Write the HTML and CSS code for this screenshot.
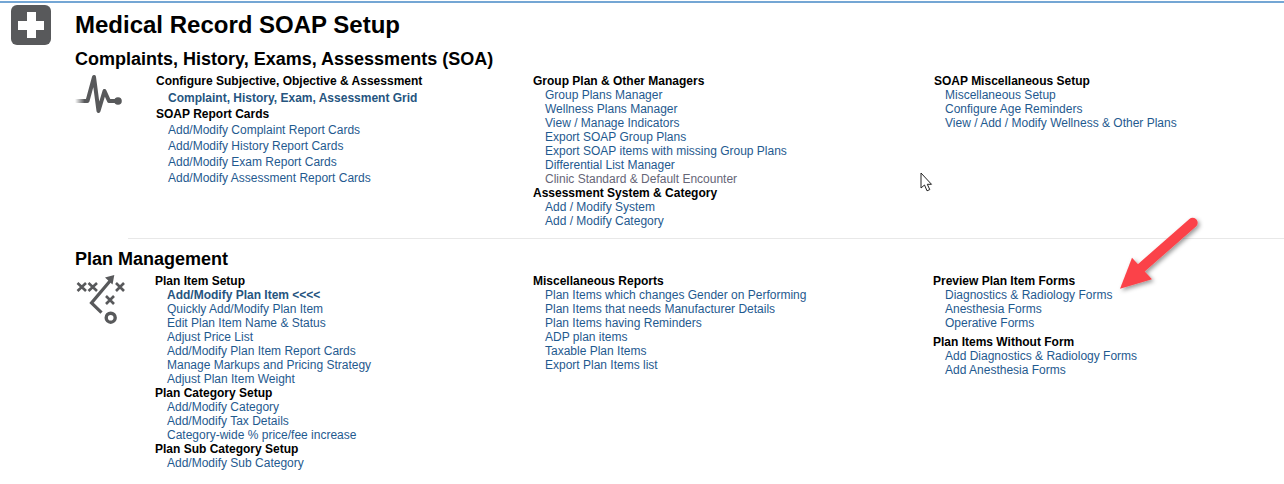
FILE: index.html
```html
<!DOCTYPE html>
<html lang="en">
<head>
    <meta charset="UTF-8">
    <title>Medical Record SOAP Setup</title>
    <link rel="stylesheet" href="styles.css">
</head>
<body>
    <div class="page">
        <div class="side">
            <div class="plusBox">
                <svg width="40" height="40" viewBox="0 0 40 40"><rect width="40" height="40" rx="6" fill="#58595b"/><path d="M16 7h9v9h8v9h-8v8h-9v-8H7v-9h9z" fill="#fff"/></svg>
            </div>
        </div>
        <div class="content">
            <h1>Medical Record SOAP Setup</h1>

            <div class="section first">
                <h2>Complaints, History, Exams, Assessments (SOA)</h2>
                <div class="row">
                    <div class="icon">
                        <svg width="50" height="42" viewBox="0 0 50 42"><defs><linearGradient id="fade"><stop offset="0" stop-color="#58595b" stop-opacity="0"/><stop offset="0.8" stop-color="#58595b"/></linearGradient></defs><rect x="0" y="25" width="12" height="4" fill="url(#fade)"/><path d="M11 27h1.500L19 3l4.500 34 6-20 4.500 10h9" stroke="#58595b" stroke-width="4" stroke-linejoin="round" fill="none"/><circle cx="43" cy="27" r="3.800" fill="#58595b"/></svg>
                    </div>
                    <div class="col colA">
                        <h3 class="gapBelow">Configure Subjective, Objective &amp; Assessment</h3>
                        <ul class="tall">
                            <li><a class="strong">Complaint, History, Exam, Assessment Grid</a></li>
                        </ul>
                        <h3 class="tallHead">SOAP Report Cards</h3>
                        <ul class="tall">
                            <li><a>Add/Modify Complaint Report Cards</a></li>
                            <li><a>Add/Modify History Report Cards</a></li>
                            <li><a>Add/Modify Exam Report Cards</a></li>
                            <li><a>Add/Modify Assessment Report Cards</a></li>
                        </ul>
                    </div>
                    <div class="col colB">
                        <h3>Group Plan &amp; Other Managers</h3>
                        <ul>
                            <li><a>Group Plans Manager</a></li>
                            <li><a>Wellness Plans Manager</a></li>
                            <li><a>View / Manage Indicators</a></li>
                            <li><a>Export SOAP Group Plans</a></li>
                            <li><a>Export SOAP items with missing Group Plans</a></li>
                            <li><a>Differential List Manager</a></li>
                            <li><a class="muted">Clinic Standard &amp; Default Encounter</a></li>
                        </ul>
                        <h3>Assessment System &amp; Category</h3>
                        <ul>
                            <li><a>Add / Modify System</a></li>
                            <li><a>Add / Modify Category</a></li>
                        </ul>
                    </div>
                    <div class="col colC">
                        <h3>SOAP Miscellaneous Setup</h3>
                        <ul>
                            <li><a>Miscellaneous Setup</a></li>
                            <li><a>Configure Age Reminders</a></li>
                            <li><a>View / Add / Modify Wellness &amp; Other Plans</a></li>
                        </ul>
                    </div>
                </div>
            </div>

            <div class="section second">
                <h2>Plan Management</h2>
                <div class="row">
                    <div class="icon">
                        <svg width="50" height="50" viewBox="0 0 50 50" fill="none" stroke="#58595b" stroke-width="2.600"><path d="M2.500 9l8.500 8M11 9l-8.500 8M13.500 9l8.500 8M22 9l-8.500 8M41 9l8 8M49 9l-8 8M31 22l8 8M39 22l-8 8"/><path d="M35 7L16.500 29l10 9.700" stroke-width="3.200"/><path d="M39.300 1L30 3.500l7.500 7z" fill="#58595b" stroke="none"/><circle cx="35.700" cy="43.700" r="4.500" stroke-width="3.400"/></svg>
                    </div>
                    <div class="col colA">
                        <h3>Plan Item Setup</h3>
                        <ul>
                            <li><a class="strong">Add/Modify Plan Item &lt;&lt;&lt;&lt;</a></li>
                            <li><a>Quickly Add/Modify Plan Item</a></li>
                            <li><a>Edit Plan Item Name &amp; Status</a></li>
                            <li><a>Adjust Price List</a></li>
                            <li><a>Add/Modify Plan Item Report Cards</a></li>
                            <li><a>Manage Markups and Pricing Strategy</a></li>
                            <li><a>Adjust Plan Item Weight</a></li>
                        </ul>
                        <h3>Plan Category Setup</h3>
                        <ul>
                            <li><a>Add/Modify Category</a></li>
                            <li><a>Add/Modify Tax Details</a></li>
                            <li><a>Category-wide % price/fee increase</a></li>
                        </ul>
                        <h3>Plan Sub Category Setup</h3>
                        <ul>
                            <li><a>Add/Modify Sub Category</a></li>
                        </ul>
                    </div>
                    <div class="col colB">
                        <h3>Miscellaneous Reports</h3>
                        <ul>
                            <li><a>Plan Items which changes Gender on Performing</a></li>
                            <li><a>Plan Items that needs Manufacturer Details</a></li>
                            <li><a>Plan Items having Reminders</a></li>
                            <li><a>ADP plan items</a></li>
                            <li><a>Taxable Plan Items</a></li>
                            <li><a>Export Plan Items list</a></li>
                        </ul>
                    </div>
                    <div class="col colC">
                        <h3>Preview Plan Item Forms</h3>
                        <ul>
                            <li><a>Diagnostics &amp; Radiology Forms</a></li>
                            <li><a>Anesthesia Forms</a></li>
                            <li><a>Operative Forms</a></li>
                        </ul>
                        <h3 class="spaced">Plan Items Without Form</h3>
                        <ul>
                            <li><a>Add Diagnostics &amp; Radiology Forms</a></li>
                            <li><a>Add Anesthesia Forms</a></li>
                        </ul>
                    </div>
                </div>
            </div>
        </div>
    </div>

    <svg class="cursor" width="14" height="20" viewBox="0 0 14 20"><path d="M1 1v15l3.500-3 2.500 5.800 2.800-1.200-2.500-5.300h4.200z" fill="#fff" stroke="#222" stroke-width="1"/></svg>

    <svg class="arrow" width="100" height="90" viewBox="0 0 100 90"><defs><filter id="shadow" x="-20%" y="-20%" width="150%" height="150%"><feDropShadow dx="2" dy="2" stdDeviation="2" flood-color="#000" flood-opacity="0.4"/></filter></defs><g filter="url(#shadow)"><path d="M74.700 9.700L22 56" stroke="#fb4349" stroke-width="10" stroke-linecap="round" fill="none"/><path d="M2 75.700L14 44.700 34 66.300z" fill="#fb4349"/></g></svg>
</body>
</html>
```

FILE: styles.css
```css
* {
    box-sizing: border-box;
}

html, body {
    margin: 0;
    height: 484px;
    overflow: hidden;
}

body {
    position: relative;
    background: #fff;
    border-top: 1px solid #fff;
    font-family: "Liberation Sans", Arial, sans-serif;
    font-size: 12px;
    color: #000;
}

.page {
    display: flex;
    border-top: 2px solid #74a6d4;
}

.side {
    width: 75px;
    flex-shrink: 0;
    padding: 2px 0 0 11px;
}

.plusBox svg {
    display: block;
}

.content {
    flex: 1;
}

h1 {
    margin: 8px 0 0;
    font-size: 24px;
    line-height: 28px;
    font-weight: bold;
}

h2 {
    margin: 0;
    font-size: 18px;
    line-height: 22px;
    font-weight: bold;
}

h3 {
    margin: 0;
    font-size: 12px;
    line-height: 14px;
    font-weight: bold;
}

.section.first {
    margin-top: 9px;
    height: 190px;
}

.section.second {
    margin-left: 53px;
    padding-top: 9px;
    border-top: 1px solid #e8e8e8;
}

.section.second h2,
.section.second .row {
    margin-left: -53px;
}

.row {
    display: flex;
    margin-top: 4px;
}

.icon {
    width: 81px;
    flex-shrink: 0;
}

.icon svg {
    display: block;
}

.col {
    flex-shrink: 0;
}

.colA {
    width: 377px;
}

.colB {
    width: 401px;
}

.second .icon {
    width: 80px;
}

.second .colA {
    width: 378px;
}

.second .colB {
    width: 400px;
}

ul {
    list-style: none;
    margin: 0;
    padding: 0 0 0 12px;
}

.first .colC ul {
    padding-left: 11px;
}

li {
    line-height: 14px;
}

ul.tall li,
.tallHead {
    line-height: 16px;
}

.gapBelow {
    margin-bottom: 2px;
}

a {
    color: #1f5a8f;
}

a.strong {
    font-weight: bold;
    color: #26557f;
}

a.muted {
    color: #667;
}

.spaced {
    margin-top: 5px;
}

.cursor {
    position: absolute;
    left: 920px;
    top: 171px;
}

.arrow {
    position: absolute;
    left: 1118px;
    top: 212px;
}
```
